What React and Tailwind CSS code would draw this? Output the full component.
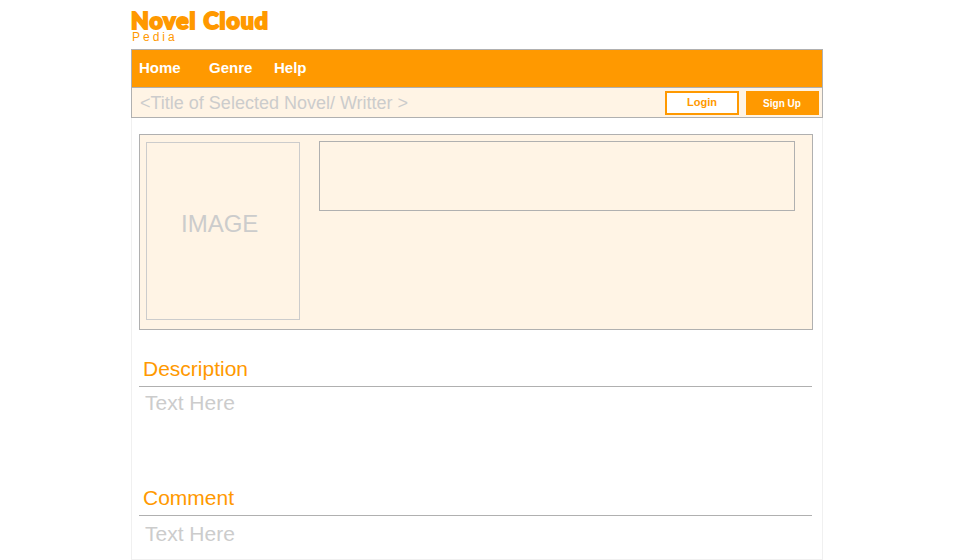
function Section({ title, heading, body, className }) {
  return (
    <section className={className}>
      <h2 className={`border-b border-[#b0b0b0] pl-1 text-[21px] text-[#ff9900] ${heading}`}>{title}</h2>
      <p className={`text-[21px] leading-6 text-[#cccccc] ${body}`}>Text Here</p>
    </section>
  );
}

export default function App() {
  return (
    <div className="h-[560px] overflow-hidden bg-white font-['Liberation_Sans',Arial,sans-serif] whitespace-nowrap">
      <div className="ml-[131px] flex h-full w-[692px] flex-col">
        <header className="h-[49px] pt-2 text-[#ff9900]">
          <h1 className="flex h-6 gap-[7px] font-['Lato',sans-serif] text-[23px] leading-6 font-black tracking-[1px] [-webkit-text-stroke:2px_#ff9900]">
            <span>Novel</span>
            <span>Cloud</span>
          </h1>
          <p className="pl-px text-[12px] leading-[10px] tracking-[3px]">Pedia</p>
        </header>

        <div className="h-[69px] border border-[#b0b0b0] bg-[#fff4e5]">
          <nav className="flex h-[38px] border-b border-[#b0b0b0] bg-[#ff9900] pl-[7px] text-[15px] leading-9 font-bold text-white">
            <a className="w-[70px]">Home</a>
            <a className="w-[65px]">Genre</a>
            <a>Help</a>
          </nav>
          <div className="flex h-[29px] items-center pr-[3px] pl-2">
            <span className="flex-1 pt-px text-[18px] leading-[29px] text-[#cccccc]">&lt;Title of Selected Novel/ Writter &gt;</span>
            <button className="mr-[7px] h-6 w-[74px] border-2 border-[#ff9900] bg-white pb-px text-[11px] leading-[19px] font-bold text-[#ff9900]">Login</button>
            <button className="h-6 w-[73px] bg-[#ff9900] pr-px text-[10px] leading-[25px] font-bold text-white">Sign Up</button>
          </div>
        </div>

        <main className="h-[442px] border-x border-b border-[#f0f0f0] pt-4 pr-[9px] pl-[7px]">
          <div className="flex h-[196px] w-[674px] border border-[#b0b0b0] bg-[#fff4e5] pt-1.5 pl-1.5">
            <div className="mt-px h-[178px] w-[154px] border border-[#cccccc] pt-[67px] pl-[34px] text-[24px] leading-7 text-[#cccccc]">IMAGE</div>
            <div className="ml-[19px] h-[70px] w-[476px] border border-[#b0b0b0]" />
          </div>
          <Section title="Description" className="h-[129px] w-[673px] pt-[26px]" heading="h-[31px] leading-[26px]" body="pt-1 pl-1.5" />
          <Section title="Comment" className="w-[673px] pt-[26px]" heading="h-[31px] leading-[26px]" body="pt-1.5 pl-1.5" />
        </main>
      </div>
    </div>
  );
}
